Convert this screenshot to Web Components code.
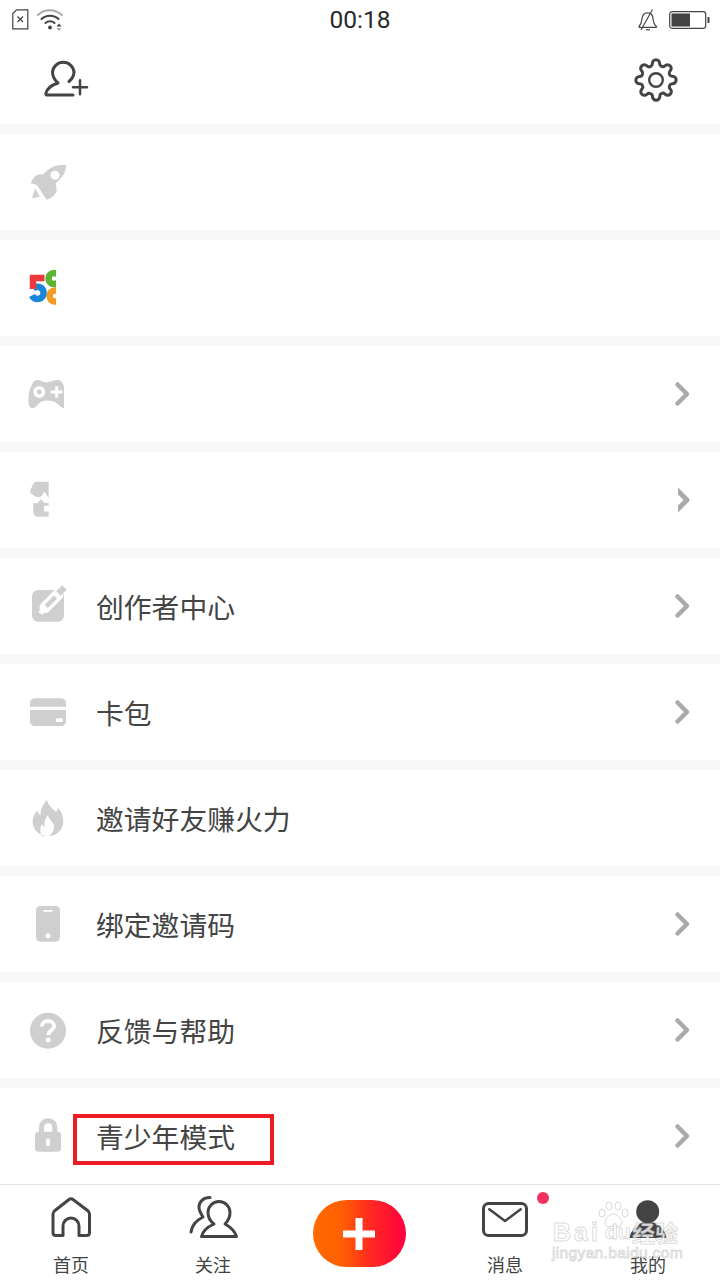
<!DOCTYPE html>
<html lang="zh">
<head>
<meta charset="utf-8">
<title>我的</title>
<style>
    html, body { margin: 0; padding: 0; background: #f8f8f8; }
    body {
        width: 720px;
        height: 1280px;
        overflow: hidden;
        display: flex;
        flex-direction: column;
        font-family: "Noto Sans CJK SC", "Noto Sans", sans-serif;
    }
    menu-row + menu-row { margin-top: 10px; }
</style>
</head>
<body>
<status-bar time="00:18"></status-bar>
<top-header></top-header>
<menu-list>
    <menu-row icon="rocket"></menu-row>
    <menu-row icon="logo58"></menu-row>
    <menu-row icon="game" arrow></menu-row>
    <menu-row icon="shirt" arrow="small"></menu-row>
    <menu-row icon="edit" drop arrow>创作者中心</menu-row>
    <menu-row icon="card" drop arrow>卡包</menu-row>
    <menu-row icon="fire" drop>邀请好友赚火力</menu-row>
    <menu-row icon="phone" drop arrow>绑定邀请码</menu-row>
    <menu-row icon="help" drop arrow>反馈与帮助</menu-row>
    <menu-row icon="lock" drop arrow marked>青少年模式</menu-row>
</menu-list>
<tab-bar></tab-bar>

<script>
const GRAY = '#cfcfcf';
const DARK = '#444';

const ICONS = {
    rocket: `<path fill="${GRAY}" fill-rule="evenodd" d="M38 3C33 2.800 28 3 24 5.200 20 7.500 17 10 15 12.500 12 12 9 12.500 7 14.500 5 16.500 3.500 19 2.700 21.300L9 23 18.500 37.800C23 36.500 27 33 28.500 29.500 29 26.500 28 23.500 27.500 21.500 32 17.500 35.500 13.500 37 9.500 37.800 7.500 38 5 38 3ZM27 8.800A4.500 4.500 0 1 1 27 17.800 4.500 4.500 0 0 1 27 8.800Z"/>
        <path fill="${GRAY}" d="M7 26.300 4 36.300 12 34.700Z"/>`,
    logo58: `<defs><clipPath id="c58"><rect x="0" y="0" width="28" height="40"/></clipPath></defs>
        <g clip-path="url(#c58)" fill="none">
            <circle cx="26" cy="10.500" r="5.500" stroke="#5cb531" stroke-width="6.500"/>
            <circle cx="27" cy="28" r="5.500" stroke="#f59a23" stroke-width="6.500"/>
            <path stroke="#1a86d8" stroke-width="6.500" d="M5 20.500C7 19 9 18.500 11 19 15 20 16 23 15.500 26 15 29.500 12 31 9.500 31 7 31 5 29.500 4 27.500"/>
            <path stroke="#ee3a3a" stroke-width="6.500" d="M16.500 10H5V21"/>
        </g>`,
    game: `<path fill="${GRAY}" fill-rule="evenodd" d="M9 6C12 6 15 8 18.500 8.500 22 8 26 6 30 6 33 6 35 9 36 13V34.500C33 33.500 30 30 27 28 24 26.500 21 26.500 18 26.500 14 26.500 11 29 9 31.500 7 34 4 35 2 33 .5 31 0 27 .5 23 1 17 3 12 5 8.500 6 7 7.500 6 9 6ZM11.300 12A6 6 0 1 0 11.300 24 6 6 0 0 0 11.300 12ZM11.300 15.600A2.400 2.400 0 1 1 11.300 20.400 2.400 2.400 0 0 1 11.300 15.600Z"/>
        <path stroke="#fff" stroke-width="3" d="M22.500 18H34.500M28.700 12.300V23.700"/>`,
    shirt: `<path fill="${GRAY}" d="M7 1.700H20.700V18C19 16 18 13.500 16.500 12 15 13 14 17 11 17.300 8 17.500 3.500 14.500 2 12 3 8 5 4 7 1.700Z"/>
        <path fill="${GRAY}" d="M12.700 19.300 16.500 22.800 20.700 23.300V25.800H16V31.500H20.700V36.700H9.500C7 36.700 5.300 34.500 5.300 32V23.300H9.500Z"/>`,
    edit: `<rect x="4" y="2" width="32" height="31.700" rx="6" fill="${GRAY}"/>
        <path stroke="#fff" stroke-width="11" stroke-linecap="round" d="M17 19.500 30 6.500"/>
        <path stroke="#fff" stroke-width="5" d="M12.500 25.500 16 20"/>
        <path stroke="${GRAY}" stroke-width="4.500" d="M18.300 18.300 27.500 9"/>
        <path stroke="${GRAY}" stroke-width="6.500" d="M30.500 5.500 36.500 -.5"/>`,
    card: `<path fill="${GRAY}" d="M2 12.700V9.300C2 6.500 4 4.300 7 4.300H33C36 4.300 38 6.500 38 9.300V12.700Z"/>
        <path fill="${GRAY}" fill-rule="evenodd" d="M2 16H38V27C38 30 36 32 33 32H7C4 32 2 30 2 27ZM28 24.300V28H34.700V24.300Z"/>`,
    fire: `<path fill="${GRAY}" fill-rule="evenodd" d="M19 0C20 5 24 8 28 12 29.500 10.500 30 9 30 7.500 33 11 35.300 15.500 35.300 21 35.300 30 28.500 36 20 36 11.500 36 4.700 30 4.700 22 4.700 17.500 7 13 9.500 10.500 10 13 11 14.500 12.500 15.500 12.500 9.500 15 4 19 0ZM20 15C20.500 19 24 21 25.500 24 27 27 25.500 33 21 36H14C12 33 11.500 28 14 24 14.800 25.500 15.500 26.500 16.500 27 16 22.500 17 18 20 15Z"/>`,
    phone: `<rect x="8" y="0" width="24" height="35.700" rx="4.500" fill="${GRAY}"/>
        <rect x="15.300" y="4" width="9.400" height="1.800" rx=".9" fill="#fff"/>
        <circle cx="20" cy="29.700" r="2.500" fill="#fff"/>`,
    help: `<circle cx="20" cy="18.700" r="18" fill="${GRAY}"/>
        <path fill="none" stroke="#fff" stroke-width="3.800" d="M13.800 14.500C13.800 11 16.500 9 20 9 23.500 9 26.200 11 26.200 14 26.200 18 20.300 18.500 20.300 23"/>
        <circle cx="20.200" cy="28" r="2.500" fill="#fff"/>`,
    lock: `<path fill="none" stroke="${GRAY}" stroke-width="5" d="M13.500 15V9.500C13.500 5.500 16 2.800 20 2.800 24 2.800 26.800 5.500 26.800 9.500V15"/>
        <rect x="7" y="13.700" width="26" height="20" rx="3.500" fill="${GRAY}"/>
        <rect x="18" y="20.300" width="4" height="8" rx="2" fill="#fff"/>`,
    home: `<path fill="none" stroke="${DARK}" stroke-width="3" stroke-linejoin="round" d="M17 39.500H10Q7 39.500 7 36.500V18Q7 16 9 14.500L23 3.500Q25 2 27 3.500L41.500 14.500Q43.500 16 43.500 18V36.500Q43.500 39.500 40.500 39.500H33V30A8 8 0 0 0 17 30Z"/>`,
    friends: `<g fill="none" stroke="${DARK}" stroke-width="3" stroke-linecap="round" stroke-linejoin="round">
            <path d="M13.500 40.500Q15 33 26 28C22 25 20 21 20 16.500A11 11 0 1 1 42 16.500C42 21 40 25 37 28Q46 33 48.500 40.500Z"/>
            <path d="M22 1.500C15 1.500 11 6 11 11 11 15 13 18 15 21 9 24 4 29 3 36"/>
        </g>`,
    mail: `<rect x="3.500" y="7.500" width="43" height="32" rx="5" fill="none" stroke="${DARK}" stroke-width="3"/>
        <path fill="none" stroke="${DARK}" stroke-width="2.500" stroke-linecap="round" stroke-linejoin="round" d="M9.300 13.300 25 25 40.700 13.300"/>`,
    person: `<circle cx="24.700" cy="15.700" r="11.500" fill="${DARK}"/>
        <path fill="${DARK}" d="M6.300 42Q8 32 19 26.500H31Q42 32 43.700 42Z"/>`
};

class StatusBar extends HTMLElement {
    constructor() {
        super();
        this.attachShadow({ mode: 'open' });
    }

    connectedCallback() {
        this.shadowRoot.innerHTML = `
            <style>
                :host {
                    display: flex;
                    align-items: center;
                    height: 40px;
                    background: #fff;
                    padding: 0 10px 0 12px;
                    position: relative;
                    flex: none;
                }
                .time {
                    flex: 1;
                    text-align: center;
                    font: 400 24.500px/40px Roboto, "Noto Sans", sans-serif;
                    color: #2a2a2a;
                    margin-left: -2px;
                }
                .left, .right { display: flex; align-items: center; width: 200px; }
                .right { justify-content: flex-end; gap: 10px; }
                .left { gap: 8px; }
                svg { display: block; overflow: visible; }
            </style>
            <div class="left">
                <svg width="17" height="22" viewBox="0 0 17 22">
                    <path fill="none" stroke="#444" stroke-width="1.200" d="M4.500 .8H15.800V19.800H.8V4.500Z"/>
                    <path stroke="#444" stroke-width="1.200" d="M5.500 7.500 11 13M11 7.500 5.500 13"/>
                </svg>
                <svg width="26" height="22" viewBox="0 0 26 22">
                    <g fill="none" stroke-width="2" stroke-linecap="round">
                        <path stroke="#aaa" d="M1 6C7-.5 18-.5 25 6"/>
                        <path stroke="#444" d="M4.500 10C9 5.500 17 5.500 21.500 10"/>
                        <path stroke="#444" d="M8.500 14C11 11.800 15 11.800 17.500 14"/>
                    </g>
                    <circle cx="13" cy="18.500" r="1.900" fill="#444"/>
                    <path fill="#444" d="M19.500 17.500 22 14.500 24.500 17.500Z"/>
                    <path fill="#aaa" d="M19.500 19 22 22 24.500 19Z"/>
                </svg>
            </div>
            <div class="time">${this.getAttribute('time')}</div>
            <div class="right">
                <svg width="22" height="22" viewBox="0 0 22 22">
                    <g fill="none" stroke="#444" stroke-width="1.200">
                        <path d="M2 17.500C4.500 15 4.500 13 5 9.500 5.500 6 7.800 3.800 10.500 3.800 14 3.800 15.800 6.500 16 9.500 16.300 13 17 15.500 19.500 17.500 19.800 18 19.500 18.300 19 18.300H2.500C2 18.300 1.800 18 2 17.500Z"/>
                        <path d="M15.500 .5 4 21"/>
                        <path d="M9 20.800H13"/>
                    </g>
                </svg>
                <svg width="41" height="18" viewBox="0 0 41 18">
                    <rect x=".7" y=".7" width="36" height="16.600" rx="2.500" fill="none" stroke="#444" stroke-width="1.200"/>
                    <rect x="2.500" y="2.500" width="18.500" height="13" fill="#444"/>
                    <rect x="38.500" y="6" width="2" height="6" fill="#444"/>
                </svg>
            </div>
        `;
    }
}

class TopHeader extends HTMLElement {
    constructor() {
        super();
        this.attachShadow({ mode: 'open' });
    }

    connectedCallback() {
        this.shadowRoot.innerHTML = `
            <style>
                :host {
                    display: flex;
                    justify-content: space-between;
                    align-items: flex-start;
                    height: 66px;
                    padding: 18px 42px 0 44px;
                    background: #fff;
                    margin-bottom: 10px;
                    flex: none;
                }
                svg { display: block; overflow: visible; }
            </style>
            <svg width="46" height="42" viewBox="0 0 46 42" fill="none" stroke="${DARK}" stroke-width="3" stroke-linecap="round" stroke-linejoin="round">
                <path d="M29 37H3Q1.500 37 2 35C3 31 8 27 14 25 10 21.500 8.500 18 8.500 14A10.800 10.800 0 0 1 30 14C30 18 28 21 25 23.500"/>
                <path stroke-width="2.500" d="M29 29.300H43M36 22.300V36.300"/>
            </svg>
            <svg width="44" height="44" viewBox="0 0 24 24" fill="none" stroke="${DARK}" stroke-width="1.650" stroke-linecap="round" stroke-linejoin="round">
                <circle cx="12" cy="12" r="3.700" stroke-width="1.300"/>
                <path d="M19.400 15a1.650 1.650 0 0 0 .33 1.820l.06.06a2 2 0 0 1 0 2.830 2 2 0 0 1-2.830 0l-.06-.06a1.650 1.650 0 0 0-1.820-.33 1.650 1.650 0 0 0-1 1.510V21a2 2 0 0 1-2 2 2 2 0 0 1-2-2v-.09A1.650 1.650 0 0 0 9 19.400a1.650 1.650 0 0 0-1.820.33l-.06.06a2 2 0 0 1-2.830 0 2 2 0 0 1 0-2.830l.06-.06a1.650 1.650 0 0 0 .33-1.820 1.650 1.650 0 0 0-1.510-1H3a2 2 0 0 1-2-2 2 2 0 0 1 2-2h.09A1.650 1.650 0 0 0 4.600 9a1.650 1.650 0 0 0-.33-1.820l-.06-.06a2 2 0 0 1 0-2.830 2 2 0 0 1 2.830 0l.06.06a1.650 1.650 0 0 0 1.820.33H9a1.650 1.650 0 0 0 1-1.510V3a2 2 0 0 1 2-2 2 2 0 0 1 2 2v.09a1.650 1.650 0 0 0 1 1.510 1.650 1.650 0 0 0 1.820-.33l.06-.06a2 2 0 0 1 2.830 0 2 2 0 0 1 0 2.830l-.06.06a1.650 1.650 0 0 0-.33 1.820V9a1.650 1.650 0 0 0 1.510 1H21a2 2 0 0 1 2 2 2 2 0 0 1-2 2h-.09a1.650 1.650 0 0 0-1.510 1z"/>
            </svg>
        `;
    }
}

class MenuList extends HTMLElement {
    constructor() {
        super();
        this.attachShadow({ mode: 'open' });
    }

    connectedCallback() {
        this.shadowRoot.innerHTML = `
            <style>
                :host { display: flex; flex-direction: column; flex: none; }
            </style>
            <slot></slot>
        `;
    }
}

class MenuRow extends HTMLElement {
    constructor() {
        super();
        this.attachShadow({ mode: 'open' });
    }

    connectedCallback() {
        const icon = ICONS[this.getAttribute('icon')] || '';
        const arrow = this.getAttribute('arrow');
        // the smaller arrow is cut flat on its left side in the reference
        const chevron = arrow === null ? '' : arrow === 'small' ? `
            <svg class="arrow" width="20" height="28" viewBox="0 0 20 28">
                <defs><clipPath id="cut"><rect x="6" y="0" width="14" height="28"/></clipPath></defs>
                <path clip-path="url(#cut)" fill="none" stroke="#aaa" stroke-width="5" stroke-linejoin="round" d="M2 1 15 14 2 27"/>
            </svg>` : `
            <svg class="arrow" width="20" height="28" viewBox="0 0 20 28">
                <path fill="none" stroke="#aaa" stroke-width="4.500" stroke-linecap="round" stroke-linejoin="round" d="M5.500 4.500 15 14 5.500 23.500"/>
            </svg>`;
        const box = this.hasAttribute('drop') ? '0 -2 40 40' : '0 0 40 40';
        this.shadowRoot.innerHTML = `
            <style>
                :host {
                    display: flex;
                    align-items: center;
                    position: relative;
                    height: 96px;
                    padding: 0 28px;
                    background: #fff;
                    font: 400 27.800px/40px "Noto Sans CJK SC", sans-serif;
                    color: #444;
                }
                .icon { display: block; flex: none; width: 40px; height: 40px; overflow: visible; margin-right: 28px; }
                .label { flex: 1; }
                .arrow { display: block; flex: none; }
                .mark {
                    position: absolute;
                    left: 73px;
                    top: 26px;
                    width: 193px;
                    height: 43px;
                    border: 4px solid #ed1c24;
                }
            </style>
            <svg class="icon" viewBox="${box}">${icon}</svg>
            <span class="label"><slot></slot></span>
            ${chevron}
            ${this.hasAttribute('marked') ? '<span class="mark"></span>' : ''}
        `;
    }
}

class TabItem extends HTMLElement {
    constructor() {
        super();
        this.attachShadow({ mode: 'open' });
    }

    connectedCallback() {
        const icon = ICONS[this.getAttribute('icon')] || '';
        this.shadowRoot.innerHTML = `
            <style>
                :host {
                    display: flex;
                    flex-direction: column;
                    align-items: center;
                    padding-top: 11px;
                    font: 400 18px/24px "Noto Sans CJK SC", sans-serif;
                    color: #444;
                    position: relative;
                }
                svg { display: block; overflow: visible; margin-bottom: 12px; }
                .dot {
                    position: absolute;
                    left: 103px;
                    top: 7px;
                    width: 12px;
                    height: 12px;
                    border-radius: 50%;
                    background: #f5305f;
                }
            </style>
            <svg width="50" height="44" viewBox="0 0 50 44">${icon}</svg>
            <slot></slot>
            ${this.hasAttribute('dot') ? '<span class="dot"></span>' : ''}
        `;
    }
}

class PublishButton extends HTMLElement {
    constructor() {
        super();
        this.attachShadow({ mode: 'open' });
    }

    connectedCallback() {
        this.shadowRoot.innerHTML = `
            <style>
                :host {
                    display: flex;
                    align-items: center;
                    justify-content: center;
                    width: 93px;
                    height: 67px;
                    margin: 15px auto 0;
                    border-radius: 34px;
                    background: linear-gradient(90deg, #ff6a00 0%, #ff6000 30%, #ff2a22 62%, #ff0040 100%);
                }
                svg { display: block; }
            </style>
            <svg width="34" height="34" viewBox="0 0 34 34">
                <path stroke="#fff" stroke-width="7" d="M1 17H33M17 1V33"/>
            </svg>
        `;
    }
}

class TabBar extends HTMLElement {
    constructor() {
        super();
        this.attachShadow({ mode: 'open' });
    }

    connectedCallback() {
        this.shadowRoot.innerHTML = `
            <style>
                :host {
                    display: grid;
                    grid-template-columns: 142px 142px 150px 142px 144px;
                    height: 95px;
                    border-top: 1px solid #e5e5e5;
                    background: #fff;
                    position: relative;
                    flex: none;
                }
                .mark {
                    position: absolute;
                    left: 552px;
                    top: 14px;
                    width: 132px;
                    height: 66px;
                    color: rgba(255, 255, 255, .8);
                    -webkit-text-stroke: 1px rgba(150, 150, 150, .35);
                    font-family: "Liberation Sans", sans-serif;
                    pointer-events: none;
                }
                .paw { position: absolute; left: 46px; top: 2px; }
                .brand {
                    position: absolute;
                    top: 19px;
                    white-space: nowrap;
                    font-size: 25px;
                    line-height: 28px;
                    font-weight: 700;
                }
                .bai { left: 1px; letter-spacing: 3px; }
                .du { left: 53px; font-size: 21px; }
                .word { left: 80px; font: 700 23px/28px "Noto Sans CJK SC", sans-serif; }
                .site {
                    position: absolute;
                    left: 0;
                    top: 45px;
                    font-size: 15.500px;
                    line-height: 18px;
                    letter-spacing: .35px;
                    white-space: nowrap;
                }
            </style>
            <tab-item icon="home">首页</tab-item>
            <tab-item icon="friends">关注</tab-item>
            <publish-button></publish-button>
            <tab-item icon="mail" dot>消息</tab-item>
            <tab-item icon="person">我的</tab-item>
            <div class="mark">
                <svg class="paw" width="32" height="28" viewBox="0 0 32 28" fill="rgba(255,255,255,.7)" stroke="rgba(150,150,150,.35)">
                    <ellipse cx="4" cy="12" rx="3" ry="4"/>
                    <ellipse cx="11" cy="5" rx="3" ry="4"/>
                    <ellipse cx="20" cy="5" rx="3" ry="4"/>
                    <ellipse cx="27" cy="12" rx="3" ry="4"/>
                    <path d="M15.500 13C11 13 7 18 7 22 7 26 12 26 15.500 25 19 26 24 26 24 22 24 18 20 13 15.500 13Z"/>
                </svg>
                <span class="brand bai">Bai</span>
                <span class="brand du">du</span>
                <span class="brand word">经验</span>
                <div class="site">jingyan.baidu.com</div>
            </div>
        `;
    }
}

customElements.define('status-bar', StatusBar);
customElements.define('top-header', TopHeader);
customElements.define('menu-list', MenuList);
customElements.define('menu-row', MenuRow);
customElements.define('tab-item', TabItem);
customElements.define('publish-button', PublishButton);
customElements.define('tab-bar', TabBar);
</script>
</body>
</html>
